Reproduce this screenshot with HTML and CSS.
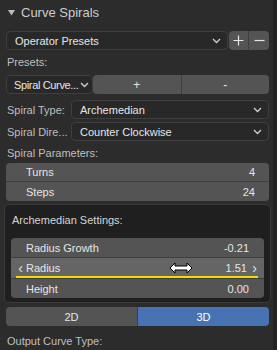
FILE: index.html
```html
<!DOCTYPE html>
<html>
<head>
<meta charset="utf-8">
<link rel="stylesheet" href="styles.css">
</head>
<body>
<div class="region">
  <div class="panel">
    <div class="header">
      <svg class="tri" width="7" height="6" viewBox="0 0 7 6"><polygon points="0,0 7,0 3.5,5.5" fill="#bdbdbd"/></svg>
      <span>Curve Spirals</span>
    </div>
    <div class="content">
      <div class="row r-ops">
        <div class="menu grow"><span class="mtext">Operator Presets</span><svg class="chev" width="9" height="6" viewBox="0 0 9 6"><polyline points="1,1 4.5,4.5 8,1" fill="none" stroke="#d0d0d0" stroke-width="1.3"/></svg></div>
        <div class="btns">
          <div class="btn sq"><svg width="11" height="11" viewBox="0 0 11 11"><path d="M5.5 0.5v10M0.5 5.5h10" stroke="#e6e6e6" stroke-width="1.2"/></svg></div>
          <div class="btn sq"><svg width="11" height="11" viewBox="0 0 11 11"><path d="M0.5 5.5h10" stroke="#e6e6e6" stroke-width="1.2"/></svg></div>
        </div>
      </div>
      <div class="label l-presets">Presets:</div>
      <div class="row r-spiral">
        <div class="menu m-small"><span class="mtext tight">Spiral Curve...</span><svg class="chev" width="9" height="6" viewBox="0 0 9 6"><polyline points="1,1 4.5,4.5 8,1" fill="none" stroke="#d0d0d0" stroke-width="1.3"/></svg></div>
        <div class="btns grow">
          <div class="btn grow">+</div>
          <div class="btn grow">-</div>
        </div>
      </div>
      <div class="row prop p-type">
        <span class="plabel">Spiral Type:</span>
        <div class="menu grow"><span class="mtext">Archemedian</span><svg class="chev" width="9" height="6" viewBox="0 0 9 6"><polyline points="1,1 4.5,4.5 8,1" fill="none" stroke="#d0d0d0" stroke-width="1.3"/></svg></div>
      </div>
      <div class="row prop p-dir">
        <span class="plabel">Spiral Dire...</span>
        <div class="menu grow"><span class="mtext">Counter Clockwise</span><svg class="chev" width="9" height="6" viewBox="0 0 9 6"><polyline points="1,1 4.5,4.5 8,1" fill="none" stroke="#d0d0d0" stroke-width="1.3"/></svg></div>
      </div>
      <div class="label l-params">Spiral Parameters:</div>
      <div class="col c-params">
        <div class="num"><span>Turns</span><span>4</span></div>
        <div class="num"><span>Steps</span><span>24</span></div>
      </div>
      <div class="box">
        <div class="label l-arch">Archemedian Settings:</div>
        <div class="col c-inner">
          <div class="num n-in"><span>Radius Growth</span><span>-0.21</span></div>
          <div class="num n-in hover">
            <span class="arrow">‹</span><span class="nl">Radius</span><span class="nv">1.51</span><span class="arrow ar">›</span>
            <div class="yellow"></div>
            <svg class="cursor" width="24" height="12" viewBox="0 0 24 12"><path d="M1 6 L6 1 L6 4 L18 4 L18 1 L23 6 L18 11 L18 8 L6 8 L6 11 Z" fill="#ffffff" stroke="#000" stroke-width="1"/></svg>
          </div>
          <div class="num n-in"><span>Height</span><span>0.00</span></div>
        </div>
      </div>
      <div class="row r-toggle">
        <div class="btn grow t-left">2D</div>
        <div class="btn grow t-right active">3D</div>
      </div>
      <div class="label l-out">Output Curve Type:</div>
    </div>
  </div>
</div>
</body>
</html>
```

FILE: styles.css
```css
* { box-sizing: border-box; }
html, body { margin: 0; padding: 0; }
body {
  background: #262626;
  font-family: "Liberation Sans", Arial, sans-serif;
  font-size: 11px;
  color: #e6e6e6;
}
.region {
  width: 277px;
  height: 350px;
  overflow: hidden;
  background: #232323;
}
.panel {
  width: 273px;
  height: 350px;
  background: #2c2c2c;
}
.header {
  height: 25px;
  display: flex;
  align-items: center;
  padding-left: 8px;
  color: #cdcdcd;
  font-size: 13px;
}
.header .tri { margin-right: 6px; margin-top: 1px; }
.content {
  padding: 0 4px 0 6px;
  display: flex;
  flex-direction: column;
}
.row { display: flex; height: 19px; }
.grow { flex: 1; }
.menu {
  display: flex;
  align-items: center;
  background: #282828;
  border: 1px solid #3f3f3f;
  border-radius: 4px;
  padding: 0 6px 0 8px;
  color: #e6e6e6;
  min-width: 0;
}
.menu .mtext { flex: 1; white-space: nowrap; overflow: hidden; }
.menu .tight { overflow: visible; letter-spacing: -0.35px; }
.chev { flex: none; }
.btns { display: flex; }
.btn {
  display: flex;
  align-items: center;
  justify-content: center;
  background: #545454;
  color: #e6e6e6;
}
.btns .btn:first-child { border-radius: 4px 0 0 4px; border-right: 1px solid #3e3e3e; }
.btns .btn:last-child { border-radius: 0 4px 4px 0; }
.sq { width: 20px; }
.r-ops { margin-top: 6px; }
.r-ops .menu { margin-right: 1px; }
.label {
  height: 20px;
  display: flex;
  align-items: center;
  color: #bfbfbf;
  padding-left: 1px;
}
.l-presets { margin-top: 2px; }
.r-spiral { margin-top: 3px; }
.m-small { width: 87px; flex: none; padding-left: 7px; padding-right: 3px; }
.r-spiral .btns .btn { font-size: 12px; }
.prop { align-items: stretch; }
.plabel {
  width: 65px;
  flex: none;
  display: flex;
  align-items: center;
  color: #bfbfbf;
  padding-left: 1px;
  white-space: nowrap;
}
.p-type { margin-top: 6px; }
.p-dir { margin-top: 3px; }
.l-params { margin-top: 2px; }
.col { display: flex; flex-direction: column; }
.num {
  height: 19px;
  display: flex;
  align-items: center;
  justify-content: space-between;
  background: #545454;
  padding: 0 14px 0 20px;
  color: #e6e6e6;
}
.c-params .num:first-child { border-radius: 4px 4px 0 0; border-bottom: 1px solid #3e3e3e; }
.c-params .num:last-child { border-radius: 0 0 4px 4px; }
.box {
  margin: 3px -2px 0 -2px;
  background: #1f1f1f;
  border: 1px solid #3a3a3a;
  border-radius: 5px;
  padding: 5px 6px 4px 6px;
  display: flex;
  flex-direction: column;
}
.l-arch { color: #d6d6d6; }
.c-inner { margin-top: 8px; }
.n-in { height: 20px; padding: 0 15px 0 15px; position: relative; }
.c-inner .n-in:first-child { border-radius: 4px 4px 0 0; border-bottom: 1px solid #3e3e3e; }
.c-inner .n-in:last-child { border-radius: 0 0 4px 4px; border-top: 1px solid #3e3e3e; }
.hover { background: #656565; justify-content: flex-start; padding: 0 4px 0 4px; }
.hover .arrow { font-size: 14px; color: #e6e6e6; width: 11px; text-align: center; line-height: 1; }
.hover .nl { flex: 1; }
.hover .nv { margin-right: 2px; }
.yellow {
  position: absolute;
  left: 5px;
  right: 6px;
  bottom: -1px;
  height: 3px;
  background: #f0dc00;
}
.cursor { position: absolute; left: 158px; top: 4px; }
.r-toggle { margin-top: 4px; }
.t-left { border-radius: 4px 0 0 4px; border-right: 1px solid #3e3e3e; }
.t-right { border-radius: 0 4px 4px 0; }
.active { background: #4772b3; color: #ffffff; }
.l-out { margin-top: 5px; }
```
